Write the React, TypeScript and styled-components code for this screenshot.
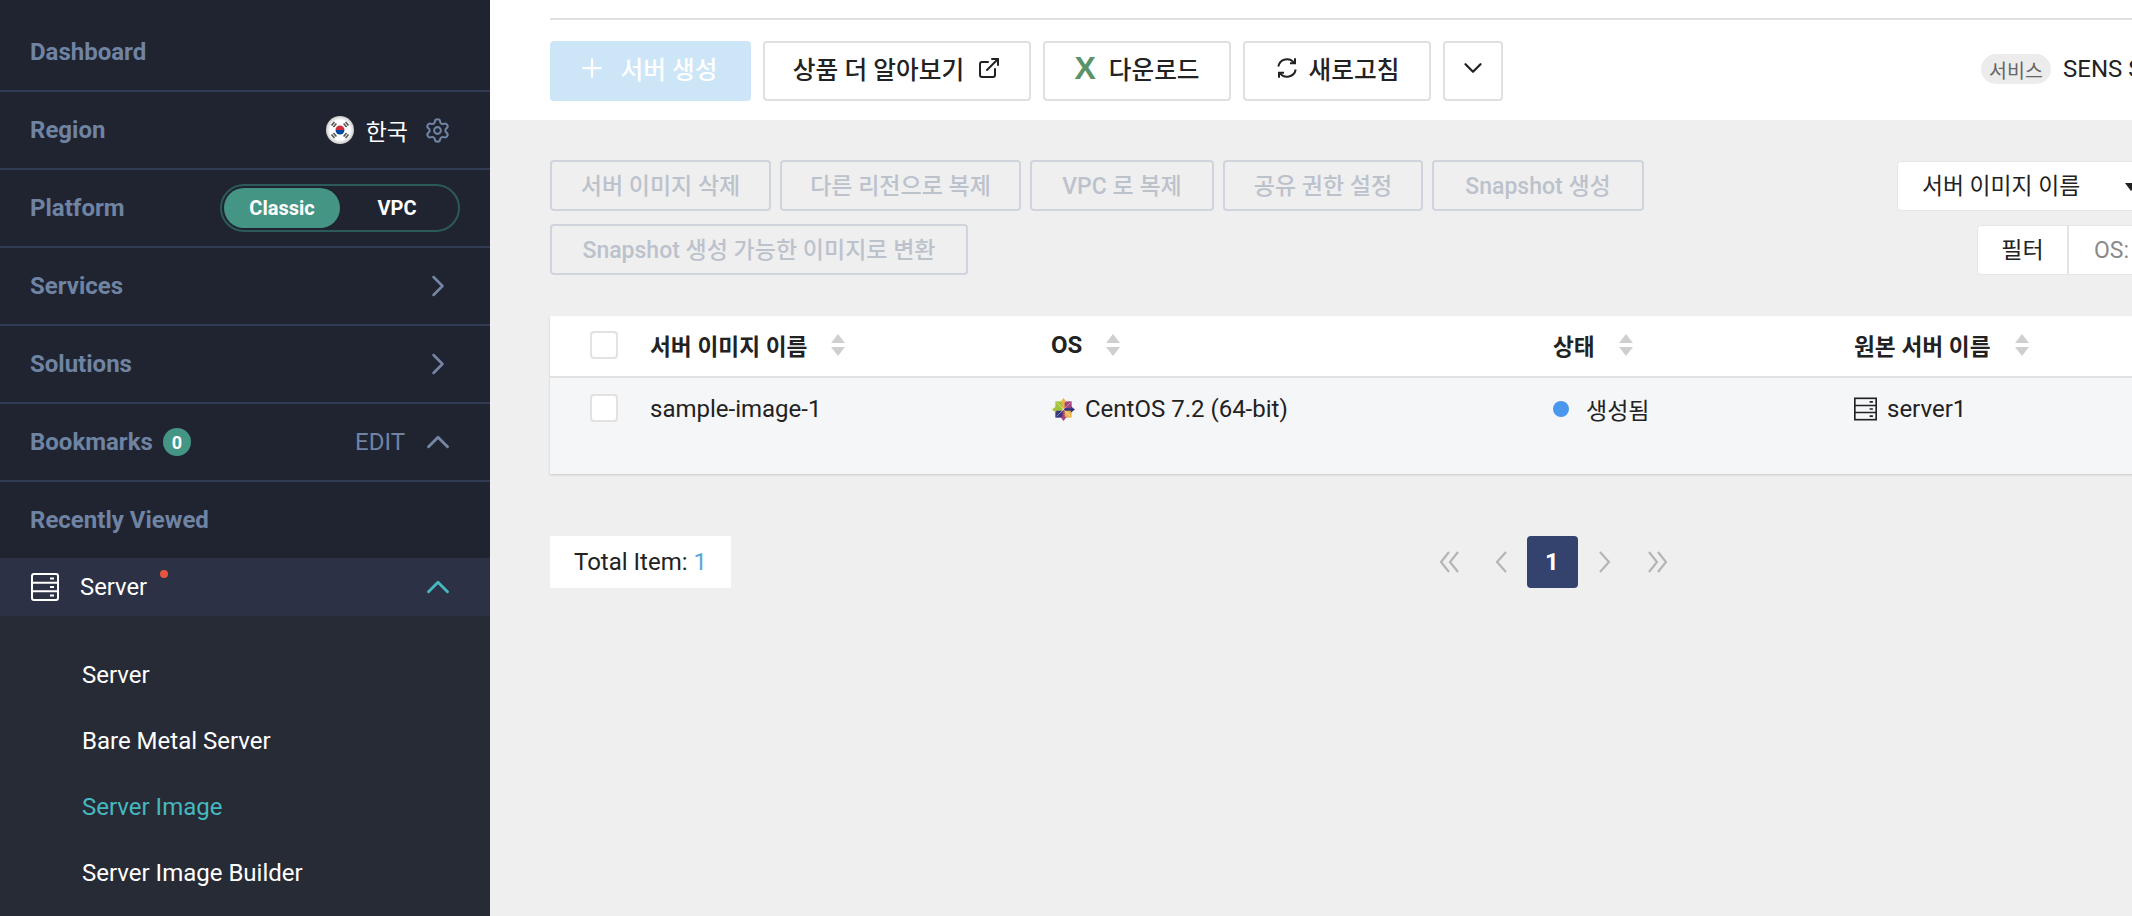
import React from "react";
import styled, { createGlobalStyle } from "styled-components";
import { Settings, ChevronRight, ChevronUp, ChevronDown, ExternalLink, Plus } from "lucide-react";

const Global = createGlobalStyle`
  html, body { margin: 0; padding: 0; width: 2132px; height: 916px; overflow: hidden; background: #efefef; }
  * { box-sizing: border-box; }
  body { font-family: Roboto, "Noto Sans CJK KR", sans-serif; color: #222; }
`;

const Page = styled.div`
  display: flex;
  width: 2614px;
  height: 916px;
`;

const Sidebar = styled.nav`
  flex: 0 0 490px;
  height: 916px;
  overflow: hidden;
  background: #1f2430;
  color: #6f83a3;
`;

const Row = styled.div<{ $first?: boolean; $last?: boolean }>`
  display: flex;
  align-items: center;
  justify-content: space-between;
  height: ${(p) => (p.$first ? 92 : p.$last ? 76 : 78)}px;
  padding: ${(p) => (p.$first ? "14px" : "0")} 40px 0 30px;
  border-bottom: ${(p) => (p.$last ? "none" : "2px solid #303c53")};
`;

const RowLabel = styled.span`
  font-size: 24px;
  font-weight: 700;
  color: #6f83a3;
`;

const RowGroup = styled.div`
  display: flex;
  align-items: center;
`;

const FlagWrap = styled.svg`
  width: 28px;
  height: 28px;
  margin-right: 12px;
`;

const RegionName = styled.span`
  font-size: 23px;
  color: #fff;
  margin-right: 16px;
`;

const GearIcon = styled(Settings)`
  width: 27px;
  height: 27px;
  color: #6f83a3;
  margin-right: -1px;
`;

const Toggle = styled.div`
  display: flex;
  width: 240px;
  height: 48px;
  margin-right: -10px;
  padding: 2px;
  border: 2px solid #2c5a5b;
  border-radius: 24px;
`;

const ToggleOption = styled.div<{ $on?: boolean }>`
  display: flex;
  align-items: center;
  justify-content: center;
  width: 116px;
  font-size: 20px;
  font-weight: 700;
  color: #fff;
  border-radius: 20px;
  background: ${(p) => (p.$on ? "#459585" : "transparent")};
  & + & { width: 114px; }
`;

const RowChevronRight = styled(ChevronRight)`
  width: 36px;
  height: 36px;
  margin-right: -6px;
  color: #7486a3;
`;

const RowChevronUp = styled(ChevronUp)<{ $teal?: boolean }>`
  width: 38px;
  height: 38px;
  margin-right: -7px;
  color: ${(p) => (p.$teal ? "#46b8c0" : "#7486a3")};
`;

const Badge = styled.span`
  display: inline-flex;
  align-items: center;
  justify-content: center;
  width: 28px;
  height: 28px;
  margin-left: 10px;
  border-radius: 50%;
  background: #459585;
  color: #fff;
  font-size: 18px;
  font-weight: 700;
`;

const EditLabel = styled.span`
  font-size: 24px;
  color: #6f83a3;
  margin-right: 14px;
`;

const ActiveRow = styled.div`
  display: flex;
  align-items: center;
  justify-content: space-between;
  height: 58px;
  padding: 0 40px 0 31px;
  background: #2c3145;
`;

const ServerName = styled.span`
  position: relative;
  margin-left: 21px;
  font-size: 23.8px;
  color: #fff;
`;

const RedDot = styled.i`
  position: absolute;
  top: -3px;
  right: -21px;
  width: 8px;
  height: 8px;
  border-radius: 50%;
  background: #e8543f;
`;

const SubMenu = styled.ul`
  list-style: none;
  margin: 0;
  padding: 26px 0 0 82px;
  height: 300px;
  background: #272b36;
`;

const SubItem = styled.li<{ $active?: boolean }>`
  display: flex;
  align-items: center;
  height: 66px;
  font-size: 24px;
  color: ${(p) => (p.$active ? "#46b8c0" : "#fff")};
`;

const Main = styled.main`
  flex: 1;
  min-width: 0;
`;

const TopBar = styled.header`
  height: 120px;
  padding: 18px 60px 0;
  background: #fff;
`;

const TopInner = styled.div`
  display: flex;
  align-items: center;
  gap: 12px;
  height: 84px;
  padding-top: 20px;
  border-top: 2px solid #e0e0e0;
`;

const ToolButton = styled.button<{ $w: number; $primary?: boolean; $gap?: number }>`
  display: inline-flex;
  align-items: center;
  justify-content: center;
  gap: ${(p) => p.$gap ?? 13}px;
  width: ${(p) => p.$w}px;
  height: 60px;
  padding: 0 0 6px;
  border: 2px solid ${(p) => (p.$primary ? "#cce6f8" : "#e0e0e0")};
  border-radius: 4px;
  background: ${(p) => (p.$primary ? "#cce6f8" : "#fff")};
  color: ${(p) => (p.$primary ? "#fff" : "#222")};
  font: 500 24.7px Roboto, "Noto Sans CJK KR", sans-serif;
`;

const PlusIcon = styled(Plus)`
  width: 30px;
  height: 30px;
  margin-left: -7px;
  margin-right: 1px;
`;

const RefreshIcon = styled.svg`
  width: 24px;
  height: 24px;
  fill: none;
  stroke: currentColor;
  stroke-width: 2;
`;

const ExcelMark = styled.span`
  color: #5a9367;
  font: 700 32px "Liberation Sans", sans-serif;
  line-height: 1;
`;

const ServiceInfo = styled.div`
  display: flex;
  align-items: center;
  gap: 12px;
  margin-left: 466px;
  margin-top: -4px;
  white-space: nowrap;
  font-size: 24px;
`;

const ServicePill = styled.span`
  display: inline-flex;
  align-items: center;
  justify-content: center;
  width: 70px;
  height: 30px;
  border-radius: 15px;
  background: #ececec;
  color: #666;
  font-size: 19.5px;
`;

const Content = styled.section`
  padding: 40px 60px 0;
`;

const ActionBar = styled.div`
  display: flex;
  justify-content: space-between;
  height: 156px;
`;

const ActionGroup = styled.div`
  display: flex;
  flex-wrap: wrap;
  align-content: flex-start;
  gap: 13px 9px;
  width: 1100px;
`;

const GhostButton = styled.button<{ $w: number }>`
  width: ${(p) => p.$w}px;
  height: 51px;
  padding: 0 0 4px;
  border: 2px solid #d0d5dd;
  border-radius: 4px;
  background: transparent;
  color: #bcc2cc;
  font: 500 23px Roboto, "Noto Sans CJK KR", sans-serif;
`;

const SearchSide = styled.div`
  display: flex;
  flex-direction: column;
  align-items: flex-end;
  gap: 14px;
  padding-top: 1px;
`;

const SearchLine = styled.div`
  display: flex;
  height: 50px;
`;

const SelectBox = styled.div`
  position: relative;
  display: flex;
  align-items: center;
  width: 260px;
  padding: 0 0 4px 24px;
  background: #fff;
  border: 1px solid #e4e4e4;
  border-radius: 4px 0 0 4px;
  font-size: 22.8px;
`;

const Caret = styled.i`
  position: absolute;
  right: 19px;
  top: 21px;
  border-left: 6px solid transparent;
  border-right: 6px solid transparent;
  border-top: 8px solid #222;
`;

const SearchInput = styled.div`
  width: 397px;
  background: #fff;
`;

const FilterLine = styled.div`
  display: flex;
  width: 577px;
  height: 50px;
  background: #fff;
  border: 1px solid #e4e4e4;
  border-radius: 4px;
  font-size: 23px;
`;

const FilterLabel = styled.div`
  display: flex;
  align-items: center;
  justify-content: center;
  width: 91px;
  padding-bottom: 4px;
  border-right: 2px solid #e4e4e4;
`;

const FilterValue = styled.div`
  display: flex;
  align-items: center;
  padding-left: 25px;
  color: #8a8a8a;
`;

const Table = styled.div`
  background: #f5f6f8;
  box-shadow: 0 1px 2px rgba(0, 0, 0, 0.16);
`;

const HeadRow = styled.div`
  display: grid;
  grid-template-columns: 100px 402px 501px 301px 1fr;
  align-items: center;
  height: 62px;
  padding-bottom: 2px;
  background: #fff;
  border-bottom: 2px solid #e2e2e2;
  font-size: 22.7px;
  font-weight: 700;
`;

const BodyRow = styled.div`
  display: grid;
  grid-template-columns: 100px 402px 501px 301px 1fr;
  align-items: start;
  height: 96px;
  padding-top: 16px;
  font-size: 24px;
`;

const CheckCell = styled.div`
  padding-left: 40px;
`;

const CheckBox = styled.span`
  display: block;
  width: 28px;
  height: 28px;
  background: #fff;
  border: 2px solid #e2e2e2;
  border-radius: 4px;
`;

const HeadCell = styled.div`
  display: flex;
  align-items: center;
  gap: 24px;
  height: 30px;
`;

const LatinHead = styled.span`
  font-size: 24px;
  margin-left: -1px;
`;

const BodyCell = styled.div`
  display: flex;
  align-items: center;
  height: 30px;
  white-space: nowrap;
`;

const KoreanText = styled.span`
  font-size: 23px;
`;

const SortIcon = styled.svg`
  width: 14px;
  height: 22px;
  color: #cfcfcf;
`;

const OsLogo = styled.svg`
  width: 23px;
  height: 23px;
  margin-right: 10px;
`;

const StatusDot = styled.i`
  width: 16px;
  height: 16px;
  margin-right: 17px;
  border-radius: 50%;
  background: #4a98ee;
`;

const CellServerIcon = styled.svg`
  width: 23px;
  height: 24px;
  margin-right: 10px;
  color: #222;
`;

const SideServerIcon = styled.svg`
  width: 28px;
  height: 28px;
  color: #fff;
`;

const Footer = styled.div`
  display: grid;
  grid-template-columns: 1fr auto 1fr;
  align-items: center;
  margin-top: 62px;
`;

const TotalBox = styled.div`
  display: flex;
  align-items: center;
  justify-content: center;
  width: 181px;
  height: 52px;
  background: #fff;
  font-size: 24px;
`;

const TotalCount = styled.span`
  margin-left: 6px;
  color: #5aa7dc;
`;

const Pager = styled.div`
  display: flex;
  align-items: center;
  margin-left: 2px;
  color: #b5b5b5;
`;

const PagerIcon = styled.svg<{ $w: number; $before?: number; $after?: number }>`
  width: ${(p) => p.$w}px;
  height: 22px;
  margin-left: ${(p) => p.$before ?? 0}px;
  margin-right: ${(p) => p.$after ?? 0}px;
  fill: none;
  stroke: currentColor;
  stroke-width: 2.2;
`;

const PageCurrent = styled.span`
  display: flex;
  align-items: center;
  justify-content: center;
  width: 51px;
  height: 52px;
  border-radius: 4px;
  background: #34426e;
  color: #fff;
  font-size: 24px;
  font-weight: 700;
`;

const KoreaFlag = () => (
  <FlagWrap viewBox="0 0 28 28">
    <defs>
      <radialGradient id="flagShade" cx="50%" cy="50%" r="50%">
        <stop offset="70%" stopColor="#ffffff" />
        <stop offset="100%" stopColor="#c9c9c9" />
      </radialGradient>
    </defs>
    <circle cx="14" cy="14" r="14" fill="url(#flagShade)" />
    <path d="M9.5 14a4.5 4.5 0 0 1 9 0z" fill="#cd2e3a" />
    <path d="M9.5 14a4.5 4.5 0 0 0 9 0z" fill="#0047a0" />
    <g stroke="#555" strokeWidth="1.6">
      <path d="M5.5 9.5l3-3.5M7.4 11l3-3.5" />
      <path d="M19.5 6l3 3.5M17.6 7.5l3 3.5" />
      <path d="M5.5 18.5l3 3.5M7.4 17l3 3.5" />
      <path d="M19.5 22l3-3.5M17.6 20.5l3-3.5" />
    </g>
  </FlagWrap>
);

const ServerGlyph = ({ rx = 2 }: { rx?: number }) => (
  <>
    <rect x="1" y="1" width="26" height="26" rx={rx} fill="none" stroke="currentColor" strokeWidth="2" />
    <path d="M1 9.7h26M1 18.3h26" stroke="currentColor" strokeWidth="2" />
    <path d="M19 5.4h4M19 14h4M19 22.6h4" stroke="currentColor" strokeWidth="2" />
  </>
);

const Sort = () => (
  <SortIcon viewBox="0 0 14 22">
    <path d="M7 0l7 9H0zM7 22L0 13h14z" fill="currentColor" />
  </SortIcon>
);

const CentOS = () => (
  <OsLogo viewBox="0 0 24 24">
    <rect x="3.5" y="3.5" width="8" height="8" fill="#a4c43c" />
    <rect x="12.5" y="3.5" width="8" height="8" fill="#a3437f" />
    <rect x="12.5" y="12.5" width="8" height="8" fill="#eeb54a" />
    <rect x="3.5" y="12.5" width="8" height="8" fill="#35357f" />
    <path d="M12 0l3.4 4.4h-2.2v7h-2.4v-7H8.600z" fill="#eeb54a" />
    <path d="M24 12l-4.400 3.400v-2.200h-7v-2.400h7V8.600z" fill="#35357f" />
    <path d="M12 24l-3.400-4.400h2.200v-7h2.400v7h2.200z" fill="#a3437f" />
    <path d="M0 12l4.400-3.400v2.200h7v2.400h-7v2.200z" fill="#a4c43c" />
    <path d="M5 5l14 14M19 5L5 19" stroke="#ffffff" strokeOpacity="0.45" strokeWidth="1" />
  </OsLogo>
);

const RefreshGlyph = () => (
  <RefreshIcon viewBox="0 0 24 24">
    <path d="M3.300 10.500A8.800 8.800 0 0 1 19 6.800" />
    <path d="M20 2.300V7.300H15" />
    <path d="M20.700 13.500A8.800 8.800 0 0 1 5 17.200" />
    <path d="M4 21.700V16.700H9" />
  </RefreshIcon>
);

export default function App() {
  return (
    <>
      <Global />
      <Page>
        <Sidebar>
          <Row $first>
            <RowLabel>Dashboard</RowLabel>
          </Row>
          <Row>
            <RowLabel>Region</RowLabel>
            <RowGroup>
              <KoreaFlag />
              <RegionName>한국</RegionName>
              <GearIcon strokeWidth={1.8} />
            </RowGroup>
          </Row>
          <Row>
            <RowLabel>Platform</RowLabel>
            <Toggle>
              <ToggleOption $on>Classic</ToggleOption>
              <ToggleOption>VPC</ToggleOption>
            </Toggle>
          </Row>
          <Row>
            <RowLabel>Services</RowLabel>
            <RowChevronRight strokeWidth={1.7} />
          </Row>
          <Row>
            <RowLabel>Solutions</RowLabel>
            <RowChevronRight strokeWidth={1.7} />
          </Row>
          <Row>
            <RowGroup>
              <RowLabel>Bookmarks</RowLabel>
              <Badge>0</Badge>
            </RowGroup>
            <RowGroup>
              <EditLabel>EDIT</EditLabel>
              <RowChevronUp strokeWidth={1.8} />
            </RowGroup>
          </Row>
          <Row $last>
            <RowLabel>Recently Viewed</RowLabel>
          </Row>
          <ActiveRow>
            <RowGroup>
              <SideServerIcon viewBox="0 0 28 28">
                <ServerGlyph />
              </SideServerIcon>
              <ServerName>
                Server
                <RedDot />
              </ServerName>
            </RowGroup>
            <RowChevronUp $teal strokeWidth={1.8} />
          </ActiveRow>
          <SubMenu>
            <SubItem>Server</SubItem>
            <SubItem>Bare Metal Server</SubItem>
            <SubItem $active>Server Image</SubItem>
            <SubItem>Server Image Builder</SubItem>
          </SubMenu>
        </Sidebar>
        <Main>
          <TopBar>
            <TopInner>
              <ToolButton $w={201} $primary>
                <PlusIcon strokeWidth={1.8} />
                서버 생성
              </ToolButton>
              <ToolButton $w={268}>
                상품 더 알아보기
                <ExternalLink size={24} strokeWidth={2} />
              </ToolButton>
              <ToolButton $w={188}>
                <ExcelMark>X</ExcelMark>
                다운로드
              </ToolButton>
              <ToolButton $w={188} $gap={10}>
                <RefreshGlyph />
                새로고침
              </ToolButton>
              <ToolButton $w={60}>
                <ChevronDown size={30} strokeWidth={1.8} />
              </ToolButton>
              <ServiceInfo>
                <ServicePill>서비스</ServicePill>
                SENS Service
              </ServiceInfo>
            </TopInner>
          </TopBar>
          <Content>
            <ActionBar>
              <ActionGroup>
                <GhostButton $w={221}>서버 이미지 삭제</GhostButton>
                <GhostButton $w={241}>다른 리전으로 복제</GhostButton>
                <GhostButton $w={184}>VPC 로 복제</GhostButton>
                <GhostButton $w={200}>공유 권한 설정</GhostButton>
                <GhostButton $w={212}>Snapshot 생성</GhostButton>
                <GhostButton $w={418}>Snapshot 생성 가능한 이미지로 변환</GhostButton>
              </ActionGroup>
              <SearchSide>
                <SearchLine>
                  <SelectBox>
                    서버 이미지 이름
                    <Caret />
                  </SelectBox>
                  <SearchInput />
                </SearchLine>
                <FilterLine>
                  <FilterLabel>필터</FilterLabel>
                  <FilterValue>OS: CentOS</FilterValue>
                </FilterLine>
              </SearchSide>
            </ActionBar>
            <Table>
              <HeadRow>
                <CheckCell>
                  <CheckBox />
                </CheckCell>
                <HeadCell>
                  서버 이미지 이름
                  <Sort />
                </HeadCell>
                <HeadCell>
                  <LatinHead>OS</LatinHead>
                  <Sort />
                </HeadCell>
                <HeadCell>
                  상태
                  <Sort />
                </HeadCell>
                <HeadCell>
                  원본 서버 이름
                  <Sort />
                </HeadCell>
              </HeadRow>
              <BodyRow>
                <CheckCell>
                  <CheckBox />
                </CheckCell>
                <BodyCell>sample-image-1</BodyCell>
                <BodyCell>
                  <CentOS />
                  CentOS 7.2 (64-bit)
                </BodyCell>
                <BodyCell>
                  <StatusDot />
                  <KoreanText>생성됨</KoreanText>
                </BodyCell>
                <BodyCell>
                  <CellServerIcon viewBox="0 0 28 28">
                    <ServerGlyph rx={0} />
                  </CellServerIcon>
                  server1
                </BodyCell>
              </BodyRow>
            </Table>
            <Footer>
              <TotalBox>
                Total Item:<TotalCount>1</TotalCount>
              </TotalBox>
              <Pager>
                <PagerIcon $w={22} viewBox="0 0 22 22" $after={35}>
                  <path d="M11 1L3 11l8 10M20 1l-8 10 8 10" />
                </PagerIcon>
                <PagerIcon $w={12} viewBox="0 0 12 22" $after={20}>
                  <path d="M11 1L2 11l9 10" />
                </PagerIcon>
                <PageCurrent>1</PageCurrent>
                <PagerIcon $w={12} viewBox="0 0 12 22" $before={21}>
                  <path d="M1 1l9 10-9 10" />
                </PagerIcon>
                <PagerIcon $w={22} viewBox="0 0 22 22" $before={36}>
                  <path d="M2 1l8 10-8 10M11 1l8 10-8 10" />
                </PagerIcon>
              </Pager>
              <div />
            </Footer>
          </Content>
        </Main>
      </Page>
    </>
  );
}
